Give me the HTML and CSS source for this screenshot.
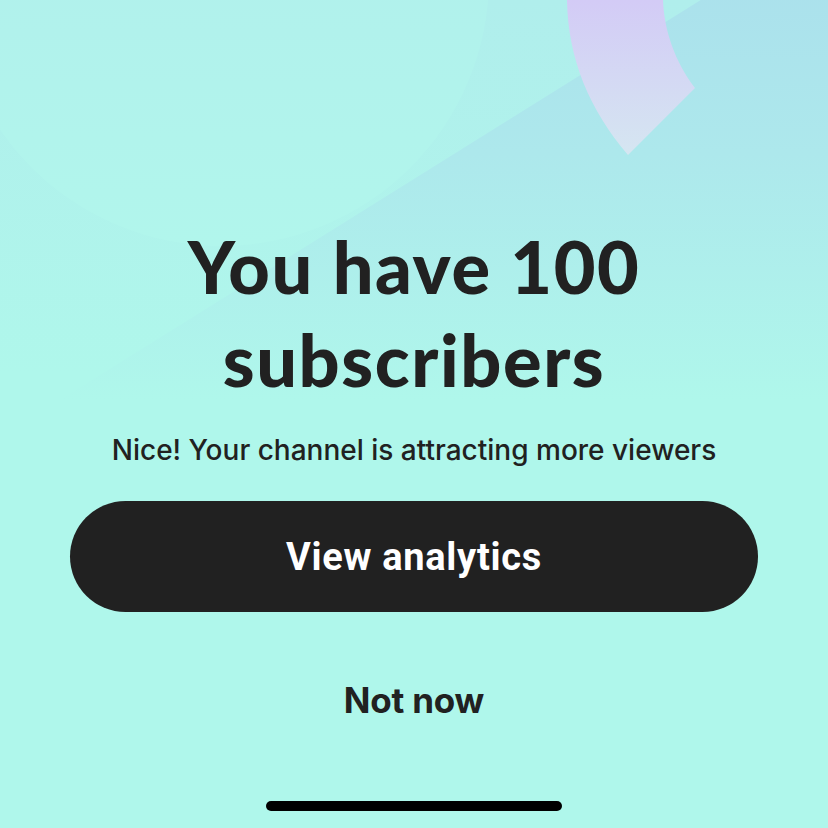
FILE: index.html
```html
<!DOCTYPE html>
<html lang="en">
<head>
    <meta charset="UTF-8">
    <meta name="viewport" content="width=device-width, initial-scale=1.0">
    <title>Milestone</title>
    <link rel="stylesheet" href="styles.css">
</head>
<body>
    <div class="screen">
        <svg class="backdrop" width="828" height="400" viewBox="0 0 828 400">
            <defs>
                <linearGradient id="lav" x1="0" y1="0" x2="0" y2="1">
                    <stop offset="0" stop-color="#d3cbf6"/>
                    <stop offset="1" stop-color="#d5e6f1"/>
                </linearGradient>
                <linearGradient id="band" x1="0" y1="0" x2="0" y2="1">
                    <stop offset="0" stop-color="#abe1ec"/>
                    <stop offset="0.4" stop-color="#ade8ec"/>
                    <stop offset="1" stop-color="#aff7eb"/>
                </linearGradient>
                <linearGradient id="disc" x1="0" y1="0" x2="0" y2="1">
                    <stop offset="0" stop-color="#b1ecec"/>
                    <stop offset="1" stop-color="#b1f6ec"/>
                </linearGradient>
            </defs>
            <polygon points="60,400 720,-12 840,-12 840,400" fill="url(#band)"/>
            <circle cx="221" cy="-22" r="268" fill="url(#disc)"/>
            <path d="M567,0 C568,60 590,110 628,155 L695,88 C675,62 664,30 663,0 Z" fill="url(#lav)"/>
        </svg>

        <div class="content">
            <h1 class="title">You have 100<br>subscribers</h1>
            <p class="subtitle">Nice! Your channel is attracting more viewers</p>
            <button class="primary">View analytics</button>
            <button class="secondary">Not now</button>
        </div>

        <div class="home-bar"></div>
    </div>
</body>
</html>
```

FILE: styles.css
```css
body {
    margin: 0;
    padding: 0;
    background-color: #aff7eb;
}
.screen {
    position: relative;
    width: 828px;
    height: 828px;
    overflow: hidden;
    background: linear-gradient(to bottom, #b0eeec 0%, #aff7eb 45%, #aff7eb 100%);
    font-family: Inter, "Liberation Sans", sans-serif;
    color: #212121;
}
.backdrop {
    position: absolute;
    top: 0;
    left: 0;
}
.content {
    position: relative;
    display: flex;
    flex-direction: column;
    align-items: center;
    padding-top: 220px;
}
.title {
    margin: 0;
    font-family: Lato, sans-serif;
    font-weight: 900;
    font-size: 72px;
    line-height: 93px;
    letter-spacing: 1.6px;
    text-align: center;
    color: #212121;
}
.subtitle {
    margin: 27px 0 0;
    font-size: 28px;
    font-weight: 500;
    line-height: 34px;
    color: #212121;
}
.primary {
    margin-top: 34px;
    width: 688px;
    height: 111px;
    border: none;
    border-radius: 56px;
    background-color: #212121;
    color: #fff;
    font-family: Roboto, sans-serif;
    font-weight: 700;
    font-size: 38px;
    letter-spacing: 0.7px;
}
.secondary {
    margin-top: 58px;
    border: none;
    background: none;
    padding: 0;
    height: 60px;
    font-family: Inter, sans-serif;
    font-weight: 700;
    font-size: 35px;
    letter-spacing: -0.2px;
    color: #212121;
}
.home-bar {
    position: absolute;
    left: 266px;
    top: 801px;
    width: 296px;
    height: 10px;
    border-radius: 5px;
    background-color: #000;
}
```
